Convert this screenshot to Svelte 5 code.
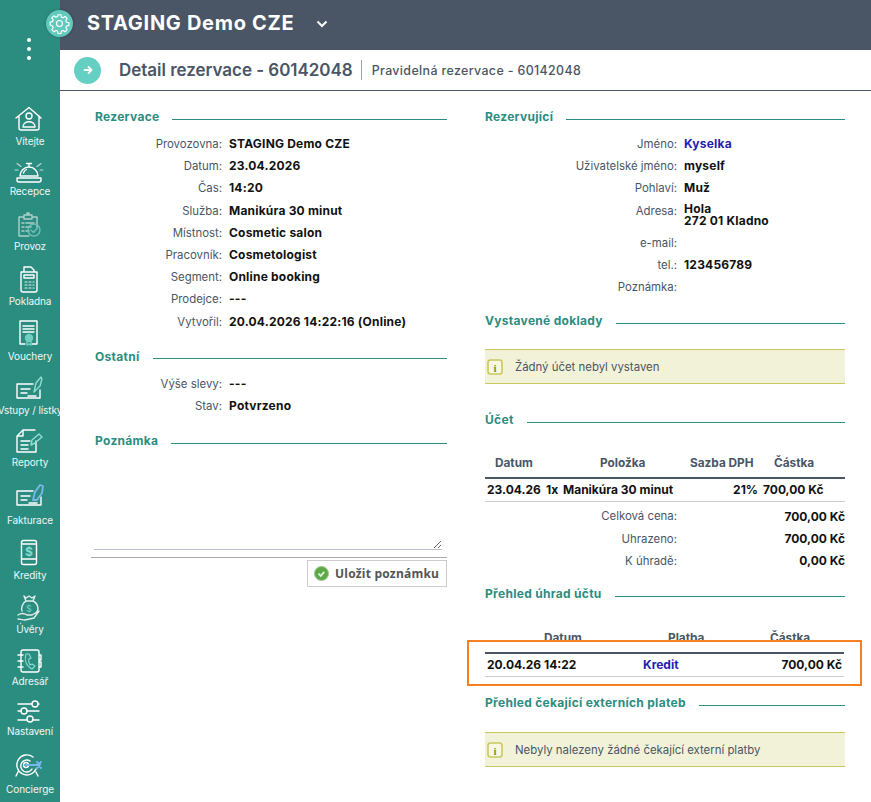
<script>
  const nav = [
    { label: 'Vítejte', h: 50 }, { label: 'Recepce', h: 50 }, { label: 'Provoz', h: 55 },
    { label: 'Pokladna', h: 55 }, { label: 'Vouchery', h: 55 }, { label: 'Vstupy / lístky', h: 54 },
    { label: 'Reporty', h: 52 }, { label: 'Fakturace', h: 58 }, { label: 'Kredity', h: 55 },
    { label: 'Úvěry', h: 54 }, { label: 'Adresář', h: 52 }, { label: 'Nastavení', h: 50 },
    { label: 'Concierge', h: 58 }
  ];
  let top = 99;
  const items = nav.map((n) => { const t = top; top += n.h; return { ...n, top: t }; });
  const rez = [
    ['Provozovna:', 'STAGING Demo CZE'], ['Datum:', '23.04.2026'], ['Čas:', '14:20'],
    ['Služba:', 'Manikúra 30 minut'], ['Místnost:', 'Cosmetic salon'], ['Pracovník:', 'Cosmetologist'],
    ['Segment:', 'Online booking'], ['Prodejce:', '---'], ['Vytvořil:', '20.04.2026 14:22:16 (Online)']
  ];
  const other = [['Výše slevy:', '---'], ['Stav:', 'Potvrzeno']];
  const sums = [['Celková cena:', '700,00 Kč'], ['Uhrazeno:', '700,00 Kč'], ['K úhradě:', '0,00 Kč']];
</script>

<div class="page">
  <aside class="side">
    <div class="dots"><i></i><i></i><i></i></div>
    {#each items as it, i}
      <div class="nav" style="height:{it.h}px">
        <svg class="ni" width="60" height={it.h - 16} viewBox="0 {it.top} 60 {it.h - 16}" fill="none" stroke="#fff" stroke-width="1.4" stroke-linejoin="round" stroke-linecap="round">
          {#if i === 0}
            <path d="M16 118 29 107.500 41 118M19 116v12a2 2 0 0 0 2 2h16a2 2 0 0 0 2-2v-12"/><circle cx="29" cy="116" r="3"/><path d="M23 127c0-7 12-7 12 0z"/>
          {:else if i === 1}
            <path d="M20 176a9 9 0 0 1 18 0zM17 178h24v2a2 2 0 0 1-2 2H19a2 2 0 0 1-2-2zM29 167v-3M26.500 163.500h5M23.500 173a6 6 0 0 1 3-3.500"/><path d="M17 163.500l4 3M41 163.500l-4 3M15 170h3M43 170h-3" opacity=".7" stroke-width="1.100"/>
          {:else if i === 2}
            <g opacity=".6"><path d="M33 217h4v10M29 236H19V217h4M24 215h8v4h-8zM27 215v-2h2v2M22 223h2M26 223h8M22 227h2M26 227h5M22 231h2M26 231h3"/><circle cx="34" cy="230" r="6" stroke="#9fe0d4"/><path d="M31 230l2.500 2.500 4-4.500" stroke="#9fe0d4"/></g>
          {:else if i === 3}
            <path d="M21 272h16v18a2 2 0 0 1-2 2H23a2 2 0 0 1-2-2zM24 272v-5h7l3 3v2M24 275h10v3H24z"/><path d="M25 282h2M29 282h2M33 282h1M25 285h2M29 285h2M33 285h1M25 288h2M29 288h2M33 288h1" stroke-width="1.200" opacity=".85"/>
          {:else if i === 4}
            <path d="M32 344h5V321H20v23h5M23 326h11M23 329h11M23 332h11" /><circle cx="29" cy="338" r="3.500" fill="#6fcfc0" stroke="#6fcfc0"/><path d="M27 341v4l2-1 2 1v-4" stroke="#6fcfc0"/>
          {:else if i === 5}
            <path d="M33 384H17v14h23v-8M21 389h9M21 393h6M28 396h8"/><path d="M34 392l2-9 5-6 1 2-2 7z" stroke="#8fdcd0" />
          {:else if i === 6}
            <path d="M36 441v11H17v-16l6-6h12M23 430v6h-6M21 441h9M21 445h7M21 449h7"/><path d="M31 445l1-5 7-6 3 3-7 6z" stroke="#8fdcd0"/>
          {:else if i === 7}
            <path d="M33 491H17v14h24v-8M21 496h9M21 500h6M29 503h8"/><path d="M33 500l2-8 5-7 3 1-1 7-5 7z" stroke="#79b8ea" stroke-width="1.800"/>
          {:else if i === 8}
            <rect x="21.500" y="540.500" width="15" height="24" rx="2"/><path d="M22 544h14M22 559h14"/><text x="29" y="555.500" text-anchor="middle" font-size="12" font-weight="700" font-family="Inter, sans-serif" fill="#7ddccb" stroke="none">$</text>
          {:else if i === 9}
            <g opacity=".85"><path d="M24 596l2 2 3-2 3 2 3-2-2 5c6 3 6 10 3 12M24 596l2 5c-4 2-5 8-4 10M26 601h7"/><path d="M18 615c3-2 6-2 9 0h5l7-4-5 7-9 2c-3 0-5-1-7-1"/><text x="29" y="612" text-anchor="middle" font-size="9" font-family="Inter, sans-serif" fill="#7ddccb" stroke="none">$</text></g>
          {:else if i === 10}
            <path d="M21 652a2 2 0 0 1 2-2h14a2 2 0 0 1 2 2v18a2 2 0 0 1-2 2H23a2 2 0 0 1-2-2zM18 655h5M18 661h5M18 667h5M39 655h2v5h-2M39 662h2v5h-2"/><path d="M26 654c-2 6 0 12 6 15l3-3-3-2-2 1c-1-2-2-4-1-6l2-1-2-4z" stroke="#8fdcd0" stroke-width="1.100"/>
          {:else if i === 11}
            <path d="M18 704h14M38 704h1M18 711h3M27 711h12M18 720h9M33 720h6"/><circle cx="35" cy="704" r="3"/><circle cx="24" cy="711" r="3"/><circle cx="30" cy="719" r="3"/>
          {:else}
            <path d="M33 757a10 10 0 1 0 3 12M30 761a6 6 0 1 0 2 8M18 772l-2 4M36 772l2 4"/><circle cx="26" cy="765" r="2.500"/><path d="M26 765h14M37 762l3 3-3 3M41 762l-3 3 3 3" stroke="#79b8ea" stroke-width="1.800"/>
          {/if}
        </svg>
        <span>{it.label}</span>
      </div>
    {/each}
  </aside>

  <div class="main">
    <header class="top">
      <div class="gear">
        <svg width="24" height="24" viewBox="0 0 24 24" fill="none" stroke="#fff" stroke-width="1.300" stroke-linejoin="round">
          <circle cx="12" cy="12" r="3.400"/>
          <path d="M10.300 2h3.400l.5 2.700 1.900.8 2.300-1.600 2.400 2.400-1.600 2.300.8 1.900 2.700.5v3.400l-2.700.5-.8 1.900 1.600 2.300-2.400 2.400-2.300-1.600-1.900.8-.5 2.700h-3.400l-.5-2.700-1.900-.8-2.300 1.600-2.400-2.400 1.600-2.300-.8-1.900L1.300 13.700v-3.400l2.700-.5.8-1.900-1.600-2.300 2.400-2.400 2.300 1.600 1.900-.8z"/>
        </svg>
      </div>
      <h1>STAGING Demo CZE</h1>
      <svg class="chev" width="12" height="8" viewBox="0 0 12 8" fill="none" stroke="#fff" stroke-width="2"><path d="M1.500 1.500 6 6l4.500-4.500"/></svg>
    </header>

    <div class="sub">
      <div class="arrow">
        <svg width="10" height="10" viewBox="0 0 10 10" fill="none" stroke="#fff" stroke-width="1.800" stroke-linecap="round" stroke-linejoin="round"><path d="M1.500 5h7M5.500 2l3 3-3 3"/></svg>
      </div>
      <h2>Detail rezervace - 60142048</h2>
      <span class="subt">Pravidelná rezervace - 60142048</span>
    </div>

    <div class="cols">
      <section class="col left">
        <h3 class="sec"><span>Rezervace</span></h3>
        <dl class="form">
          {#each rez as [k, v]}<dt>{k}</dt><dd>{v}</dd>{/each}
        </dl>
        <h3 class="sec s2"><span>Ostatní</span></h3>
        <dl class="form">
          {#each other as [k, v]}<dt>{k}</dt><dd>{v}</dd>{/each}
        </dl>
        <h3 class="sec s3"><span>Poznámka</span></h3>
        <textarea class="note"></textarea>
        <div class="noteline"></div>
        <div class="btnrow">
          <button class="save">
            <svg width="15" height="15" viewBox="0 0 15 15"><circle cx="7.500" cy="7.500" r="7" fill="#5fa848" stroke="#9ac98c"/><path d="M4.500 7.700l2.200 2.200 3.600-4" fill="none" stroke="#e4f2dc" stroke-width="1.800"/></svg>
            Uložit poznámku
          </button>
        </div>
      </section>

      <section class="col right">
        <h3 class="sec"><span>Rezervující</span></h3>
        <dl class="form r">
          <dt>Jméno:</dt><dd class="link">Kyselka</dd>
          <dt>Uživatelské jméno:</dt><dd>myself</dd>
          <dt>Pohlaví:</dt><dd>Muž</dd>
          <dt class="adr">Adresa:</dt><dd class="addr">Hola<br />272 01 Kladno</dd>
          <dt>e-mail:</dt><dd></dd>
          <dt>tel.:</dt><dd>123456789</dd>
          <dt>Poznámka:</dt><dd></dd>
        </dl>

        <h3 class="sec d1"><span>Vystavené doklady</span></h3>
        <div class="info i1">
          <svg width="16" height="16" viewBox="0 0 16 16"><rect x="1" y="1" width="14" height="14" rx="2.500" fill="#f7f7e4" stroke="#c9c85f" stroke-width="1.600"/><text x="8" y="12.500" text-anchor="middle" font-size="11" font-weight="700" font-family="Liberation Serif, serif" fill="#8f8e20">i</text></svg>
          <span>Žádný účet nebyl vystaven</span>
        </div>

        <h3 class="sec d2"><span>Účet</span></h3>
        <div class="thead t1">
          <span class="c-a">Datum</span><span class="c-b">Položka</span><span class="c-c">Sazba DPH</span><span class="c-d">Částka</span>
        </div>
        <div class="trow">
          <b>23.04.26</b><b class="qty">1x</b><b class="item">Manikúra 30 minut</b><b class="vat">21%</b><b class="amt">700,00 Kč</b>
        </div>
        <dl class="sum">
          {#each sums as [k, v]}<dt>{k}</dt><dd>{v}</dd>{/each}
        </dl>

        <h3 class="sec d3"><span>Přehled úhrad účtu</span></h3>
        <div class="thead t2">
          <span class="p-a">Datum</span><span class="p-b">Platba</span><span class="p-c">Částka</span>
        </div>
        <div class="mark">
          <div class="prow">
            <b>20.04.26 14:22</b><b class="link pay">Kredit</b><b class="pamt">700,00 Kč</b>
          </div>
        </div>

        <h3 class="sec d4"><span>Přehled čekající externích plateb</span></h3>
        <div class="info i2">
          <svg width="16" height="16" viewBox="0 0 16 16"><rect x="1" y="1" width="14" height="14" rx="2.500" fill="#f7f7e4" stroke="#c9c85f" stroke-width="1.600"/><text x="8" y="12.500" text-anchor="middle" font-size="11" font-weight="700" font-family="Liberation Serif, serif" fill="#8f8e20">i</text></svg>
          <span>Nebyly nalezeny žádné čekající externí platby</span>
        </div>
      </section>
    </div>
  </div>
</div>

<style>
  :global(body) { margin: 0; background: #fff; }
  .page { display: flex; width: 871px; height: 802px; overflow: hidden; font-family: Inter, "Liberation Sans", sans-serif; font-size: 12px; color: #4a5565; }
  .side { width: 60px; flex: none; background: #2b8d80; color: #fff; position: relative; }
  .dots { height: 99px; box-sizing: border-box; padding-top: 38px; display: flex; flex-direction: column; align-items: center; gap: 5px; margin-right: 2px; }
  .dots i { width: 4px; height: 4px; border-radius: 50%; background: #fff; }
  .nav { display: flex; flex-direction: column; align-items: center; white-space: nowrap; overflow: hidden; }
  .nav svg { flex: none; }
  .nav span { height: 16px; line-height: 16px; font-size: 10px; letter-spacing: -.1px; color: #eef7f6; }

  .main { flex: 1; min-width: 0; }
  .top { height: 50px; background: #4a5565; display: flex; align-items: center; position: relative; }
  .gear { position: absolute; left: -14px; top: 10px; width: 27px; height: 27px; border-radius: 50%; background: #63c9bc; display: flex; align-items: center; justify-content: center; box-shadow: 0 0 3px rgba(0,0,0,.25); }
  .gear svg { width: 21px; height: 21px; }
  h1 { margin: 0 0 4px 27px; font-size: 20px; line-height: 1; font-weight: 700; color: #fff; letter-spacing: .7px; white-space: nowrap; }
  .chev { margin: -2px 0 0 22px; }

  .sub { height: 40px; border-bottom: 1px solid #4a5565; display: flex; align-items: center; box-sizing: content-box; }
  .arrow { width: 27px; height: 27px; border-radius: 50%; background: #66cfc4; margin-left: 14px; display: flex; align-items: center; justify-content: center; }
  h2 { margin: 0 10px 0 18px; font-size: 17px; font-weight: 600; color: #4a5565; line-height: 20px; padding-right: 8px; border-right: 1px solid #9aa1ab; white-space: nowrap; letter-spacing: -.03px; }
  .subt { font-size: 12.400px; font-weight: 500; color: #4a5565; white-space: nowrap; letter-spacing: .38px; }

  .cols { display: flex; }
  .col { flex: none; }
  .left { width: 356px; margin-left: 31px; padding-top: 19px; }
  .right { width: 360px; margin-left: 38px; padding-top: 19px; }

  .sec { margin: 0; height: 14px; font-size: 12px; line-height: 14px; font-weight: 700; color: #2b8d80; display: flex; align-items: center; gap: 13px; white-space: nowrap; letter-spacing: .3px; }
  .left .sec { padding-left: 4px; }
  .sec::after { content: ""; flex: 1; height: 1px; background: #2b8d80; margin-top: 4px; }
  .s2 { margin-top: 17px; }
  .s3 { margin-top: 17px; }
  .d1 { margin-top: 16px; }
  .d2 { margin-top: 29px; }
  .d3 { margin-top: 15px; }
  .d4 { margin-top: 10px; }

  .form { margin: 9px 0 0; display: grid; grid-template-columns: 131px 1fr; column-gap: 7px; grid-auto-rows: minmax(22.200px, auto); line-height: 14px; align-items: center; }
  .form.r { grid-template-columns: 192px 1fr; }
  .form dt { text-align: right; color: #4a5565; font-size: 11.400px; font-weight: 400; }
  .form dt.adr { align-self: start; padding-top: 4px; }
  .form dd { margin: 0; font-weight: 700; color: #111; font-size: 12px; letter-spacing: .2px; }
  .form dd.addr { line-height: 12px; padding: 3px 0 5px; }
  .link { color: #1f1fb0 !important; }

  .note { display: block; width: 348px; height: 97px; margin: 5px 0 0 3px; padding: 0; box-sizing: border-box; border: 0; border-bottom: 1px solid #b9c0d4; outline: 0; background: #fff; }
  .noteline { height: 1px; background: #aaa; margin-top: 7px; }
  .btnrow { display: flex; justify-content: flex-end; margin-top: 2px; }
  .save { height: 27px; width: 140px; box-sizing: border-box; padding: 0 0 0 6px; background: #fff; border: 1px solid #ccc; display: flex; align-items: center; gap: 6px; font: 700 12px "Open Sans", sans-serif; letter-spacing: .2px; color: #555; white-space: nowrap; }

  .info { display: flex; align-items: center; height: 35px; box-sizing: border-box; background: #f2f2d8; border-top: 1px solid #c9c85f; border-bottom: 1px solid #c9c85f; padding-left: 2px; gap: 12px; font-size: 11.400px; color: #4a5565; }
  .i1 { margin-top: 21px; }
  .i2 { margin-top: 22px; }

  .thead { position: relative; height: 14px; font-weight: 700; font-size: 11.800px; line-height: 14px; color: #4a5565; }
  .thead span { position: absolute; top: 0; white-space: nowrap; }
  .t1 { margin-top: 29px; }
  .c-a { left: 10px; } .c-b { left: 115px; } .c-c { left: 205px; } .c-d { left: 289px; }
  .t2 { margin-top: 30px; }
  .p-a { left: 59px; } .p-b { left: 183px; } .p-c { left: 285px; }

  .trow { margin-top: 7px; height: 20px; padding: 0 0 2px 2px; border-top: 2px solid #4a5565; border-bottom: 1px solid #ccc; display: grid; grid-template-columns: 59px 17px 1fr 42px 82px; align-items: center; color: #111; }
  .trow b { white-space: nowrap; font-size: 12px; }
  .vat { text-align: right; padding-right: 5px; }

  .sum { margin: 3px 0 0; display: grid; grid-template-columns: 192px 1fr; grid-auto-rows: 22.300px; align-items: center; }
  .sum dt { text-align: right; font-size: 11.400px; }
  .sum dd { margin: 0; text-align: right; font-weight: 700; color: #111; }

  .mark { position: relative; margin: -5px -17px 0 -18px; box-sizing: border-box; height: 46px; background: #fff; border: 2px solid #f58024; padding: 10px 16px 0 16px; }
  .prow { border-top: 2px solid #4a5565; border-bottom: 1px solid #ccc; height: 20px; padding: 0 2px 2px; display: grid; grid-template-columns: 156px 1fr 102px; align-items: center; color: #111; }
  .prow b { white-space: nowrap; }
  .pamt { text-align: right; }
</style>
